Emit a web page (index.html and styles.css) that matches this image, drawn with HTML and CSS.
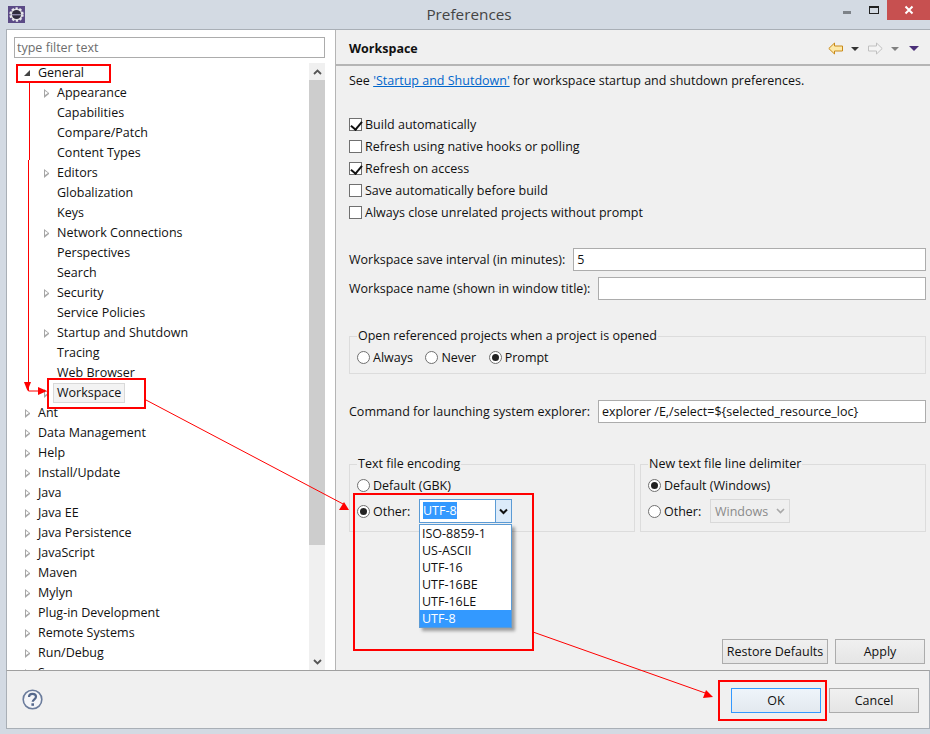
FILE: index.html
```html
<!DOCTYPE html>
<html lang="en">
<head>
    <meta charset="UTF-8">
    <title>Preferences</title>
    <link rel="stylesheet" href="styles.css">
</head>
<body>
<div class="window">
    <div class="titlebar">
        <svg class="app-icon" width="17" height="17" viewBox="0 0 17 17">
            <rect width="17" height="17" fill="#5b4a86"/>
            <circle cx="8.5" cy="8.5" r="6" fill="#d8d8dc" stroke="#e8e8ec" stroke-width="2.4" stroke-dasharray="2.2 1.6"/>
            <circle cx="8.5" cy="8.5" r="4.6" fill="#2f2b3d"/>
            <rect x="4" y="8" width="9" height="1.4" fill="#8d87a8"/>
        </svg>
        <div class="title">Preferences</div>
        <div class="win-controls">
            <span class="win-min"></span>
            <span class="win-max"></span>
            <span class="win-close">
                <svg width="10" height="10" viewBox="0 0 10 10"><path d="M1.5 1.5l7 7M8.5 1.5l-7 7" stroke="#fff" stroke-width="2" fill="none"/></svg>
            </span>
        </div>
    </div>

    <div class="main">
        <div class="left">
            <input class="filter" type="text" placeholder="type filter text">
            <div class="tree-wrap">
                <ul class="tree">
                    <li><i class="tw open"></i>General</li>
                    <li class="sub"><i class="tw"></i>Appearance</li>
                    <li class="sub"><i></i>Capabilities</li>
                    <li class="sub"><i></i>Compare/Patch</li>
                    <li class="sub"><i></i>Content Types</li>
                    <li class="sub"><i class="tw"></i>Editors</li>
                    <li class="sub"><i></i>Globalization</li>
                    <li class="sub"><i></i>Keys</li>
                    <li class="sub"><i class="tw"></i>Network Connections</li>
                    <li class="sub"><i></i>Perspectives</li>
                    <li class="sub"><i></i>Search</li>
                    <li class="sub"><i class="tw"></i>Security</li>
                    <li class="sub"><i></i>Service Policies</li>
                    <li class="sub"><i class="tw"></i>Startup and Shutdown</li>
                    <li class="sub"><i></i>Tracing</li>
                    <li class="sub"><i></i>Web Browser</li>
                    <li class="sub"><i class="tw"></i><span class="selected">Workspace</span></li>
                    <li><i class="tw"></i>Ant</li>
                    <li><i class="tw"></i>Data Management</li>
                    <li><i class="tw"></i>Help</li>
                    <li><i class="tw"></i>Install/Update</li>
                    <li><i class="tw"></i>Java</li>
                    <li><i class="tw"></i>Java EE</li>
                    <li><i class="tw"></i>Java Persistence</li>
                    <li><i class="tw"></i>JavaScript</li>
                    <li><i class="tw"></i>Maven</li>
                    <li><i class="tw"></i>Mylyn</li>
                    <li><i class="tw"></i>Plug-in Development</li>
                    <li><i class="tw"></i>Remote Systems</li>
                    <li><i class="tw"></i>Run/Debug</li>
                    <li><i class="tw"></i>Server</li>
                </ul>
                <div class="scrollbar">
                    <div class="sb-btn">
                        <svg width="9" height="6" viewBox="0 0 9 6"><path d="M1 5l3.5-3.5L8 5" stroke="#555" stroke-width="1.8" fill="none"/></svg>
                    </div>
                    <div class="sb-thumb"></div>
                    <div class="sb-rest"></div>
                    <div class="sb-btn">
                        <svg width="9" height="6" viewBox="0 0 9 6"><path d="M1 1l3.5 3.5L8 1" stroke="#555" stroke-width="1.8" fill="none"/></svg>
                    </div>
                </div>
            </div>
        </div>

        <div class="right">
            <div class="page-head">
                <h1>Workspace</h1>
                <div class="nav">
                    <svg width="15" height="13" viewBox="0 0 15 13"><path d="M6.500 1L.8 6.500 6.500 12V9H14.500V4H6.500z" fill="#fde9a8" stroke="#c98a1a"/></svg>
                    <i class="drop dark"></i>
                    <svg class="fwd" width="15" height="13" viewBox="0 0 15 13"><path d="M8.500 1l5.700 5.500L8.500 12V9H.5V4h8z" fill="#f4f4f4" stroke="#c0c0c0"/></svg>
                    <i class="drop grey"></i>
                    <i class="drop purple"></i>
                </div>
            </div>
            <div class="page">
                <p class="intro">See <a href="#">'Startup and Shutdown'</a> for workspace startup and shutdown preferences.</p>

                <div class="checks">
                    <div class="check"><i class="box on"></i>Build automatically</div>
                    <div class="check"><i class="box"></i>Refresh using native hooks or polling</div>
                    <div class="check"><i class="box on"></i>Refresh on access</div>
                    <div class="check"><i class="box"></i>Save automatically before build</div>
                    <div class="check"><i class="box"></i>Always close unrelated projects without prompt</div>
                </div>

                <div class="field first"><label>Workspace save interval (in minutes):</label><div class="txt">5</div></div>
                <div class="field second"><label>Workspace name (shown in window title):</label><div class="txt"></div></div>

                <fieldset class="group open-projects">
                    <legend>Open referenced projects when a project is opened</legend>
                    <div class="radios">
                        <span class="radio"><i class="dot"></i>Always</span>
                        <span class="radio"><i class="dot"></i>Never</span>
                        <span class="radio"><i class="dot on"></i>Prompt</span>
                    </div>
                </fieldset>

                <div class="field command"><label>Command for launching system explorer:</label><div class="txt">explorer /E,/select=${selected_resource_loc}</div></div>

                <div class="group-row">
                    <fieldset class="group half">
                        <legend>Text file encoding</legend>
                        <div class="radio-line"><i class="dot"></i>Default (GBK)</div>
                        <div class="radio-line other"><i class="dot on"></i><span class="other-label">Other:</span>
                            <div class="combo"><span class="combo-val"><b>UTF-8</b></span><span class="combo-btn"><svg width="9" height="7" viewBox="0 0 9 7"><path d="M1 1.5l3.5 3.5L8 1.5" stroke="#111" stroke-width="2" fill="none"/></svg></span></div>
                        </div>
                    </fieldset>
                    <fieldset class="group half">
                        <legend>New text file line delimiter</legend>
                        <div class="radio-line"><i class="dot on"></i>Default (Windows)</div>
                        <div class="radio-line other"><i class="dot"></i><span class="other-label">Other:</span>
                            <div class="combo-off">Windows<svg width="9" height="6" viewBox="0 0 9 6"><path d="M1 1l3.5 3.5L8 1" stroke="#a8a8a8" stroke-width="1.6" fill="none"/></svg></div>
                        </div>
                    </fieldset>
                </div>

                <div class="page-btns">
                    <button class="btn restore">Restore Defaults</button>
                    <button class="btn apply">Apply</button>
                </div>
            </div>
        </div>
    </div>

    <div class="footer">
        <svg width="21" height="21" viewBox="0 0 21 21">
            <circle cx="10.5" cy="10.5" r="9.3" fill="#f4f5f8" stroke="#6b7c9c" stroke-width="1.6"/>
            <path d="M7 8c0-2 1.600-3.200 3.500-3.200S14 6 14 7.800c0 2.400-3.300 2.600-3.300 5" fill="none" stroke="#55688c" stroke-width="2.200"/>
            <rect x="9.400" y="14.300" width="2.600" height="2.500" fill="#55688c"/>
        </svg>
        <div class="footer-btns">
            <button class="btn ok">OK</button>
            <button class="btn">Cancel</button>
        </div>
    </div>
</div>

<ul class="combo-list">
    <li>ISO-8859-1</li>
    <li>US-ASCII</li>
    <li>UTF-16</li>
    <li>UTF-16BE</li>
    <li>UTF-16LE</li>
    <li class="picked">UTF-8</li>
</ul>

<!-- red notes drawn over the screenshot -->
<svg class="notes" width="930" height="734" viewBox="0 0 930 734">
    <g fill="none" stroke="#ff0000">
        <rect x="17" y="65" width="93" height="17" stroke-width="2"/>
        <rect x="48" y="379" width="97" height="29" stroke-width="2"/>
        <rect x="354" y="494" width="179" height="156" stroke-width="2"/>
        <rect x="719" y="681" width="107" height="39" stroke-width="2"/>
        <path d="M29.500 83V160M28.500 160V391H40M146 400L345 505M533 632L708 694"/>
    </g>
    <g fill="#ff0000">
        <path d="M24 382h7l-3.500 9z"/>
        <path d="M38 387l9 4-9 4z"/>
        <path d="M349 510H339L344 502z"/>
        <path d="M713 697L703 698L706 690z"/>
    </g>
</svg>
</body>
</html>
```

FILE: styles.css
```css
* {
    box-sizing: border-box;
}
body {
    margin: 0;
    width: 930px;
    height: 734px;
    overflow: hidden;
    background-color: #d3dae3;
    font-family: "Open Sans", "Noto Sans", Arial, sans-serif;
    font-size: 12px;
    color: #111;
}
i {
    font-style: normal;
}
ul {
    list-style: none;
    margin: 0;
    padding: 0;
}

/* window frame */
.window {
    padding-left: 6px;
    height: 729px;
    display: flex;
    flex-direction: column;
}
.titlebar {
    height: 29px;
    flex: none;
    display: flex;
    margin-left: -6px;
    position: relative;
}
.app-icon {
    margin: 6px 0 0 8px;
}
.title {
    position: absolute;
    left: 8px;
    right: 0;
    top: 4px;
    text-align: center;
    font-size: 15.3px;
    color: #444;
}
.win-controls {
    margin-left: auto;
    display: flex;
    height: 20px;
    position: relative;
}
.win-min {
    width: 8px;
    height: 3px;
    margin: 11px 0 0 0;
    background: #7d8288;
}
.win-max {
    width: 10px;
    height: 8px;
    margin: 6px 8px 0 18px;
    border: 1px solid #222;
    border-top-width: 2px;
}
.win-close {
    width: 43px;
    height: 20px;
    background: #c75050;
    display: flex;
    align-items: center;
    justify-content: center;
}

.main {
    flex: 1;
    display: flex;
    min-height: 0;
    border-top: 1px solid #a9afb6;
    border-left: 1px solid #a9afb6;
}

/* left side */
.left {
    width: 329px;
    flex: none;
    background: #fff;
    padding: 7px 10px 0 7px;
    border-right: 1px solid #b5b5b5;
    display: flex;
    flex-direction: column;
}
.filter {
    width: 311px;
    height: 21px;
    flex: none;
    border: 1px solid #acacac;
    padding: 0 2px;
    font: inherit;
    font-size: 12.5px;
    outline: none;
}
.filter::placeholder {
    color: #6d6d6d;
    opacity: 1;
}
.tree-wrap {
    margin-top: 5px;
    flex: 1;
    display: flex;
    min-height: 0;
    overflow: hidden;
}
.tree {
    flex: 1;
    overflow: hidden;
}
.tree li {
    height: 20px;
    line-height: 20px;
    display: flex;
    align-items: center;
    white-space: nowrap;
    color: #111;
    font-size: 12.5px;
}
.tree li i {
    width: 7px;
    height: 9px;
    flex: none;
    margin: 0 6px 0 11px;
}
.tree li.sub {
    padding-left: 19px;
}
.tw {
    border-left: 5px solid #a6a6a6;
    border-top: 4px solid transparent;
    border-bottom: 4px solid transparent;
    position: relative;
}
.tw::after {
    content: "";
    position: absolute;
    left: -4px;
    top: -2px;
    border-left: 3px solid #fff;
    border-top: 2px solid transparent;
    border-bottom: 2px solid transparent;
}
.tree li i.open {
    width: 0;
    height: 0;
    margin: 0 8px 0 10px;
    border: 0;
    border-right: 6px solid #444;
    border-top: 6px solid transparent;
}
.tree li i.open::after {
    display: none;
}
.selected {
    background: #f3f3f3;
    border: 1px solid #d9d9d9;
    padding: 0 3px;
    margin-left: -4px;
    height: 20px;
    line-height: 18px;
}
.scrollbar {
    width: 16px;
    flex: none;
    display: flex;
    flex-direction: column;
    background: #f0f0f0;
}
.sb-btn {
    height: 17px;
    flex: none;
    display: flex;
    align-items: center;
    justify-content: center;
}
.sb-thumb {
    height: 465px;
    background: #cdcdcd;
}
.sb-rest {
    flex: 1;
}

/* right side */
.right {
    flex: 1;
    background: #f0f0f0;
    display: flex;
    flex-direction: column;
    min-width: 0;
}
.page-head {
    height: 36px;
    flex: none;
    border-bottom: 2px solid #b5b5b5;
    display: flex;
    align-items: center;
    justify-content: space-between;
    padding: 3px 11px 0 13px;
}
.page-head h1 {
    margin: 0;
    font-size: 12.5px;
    font-weight: 700;
}
.nav {
    display: flex;
    align-items: center;
}
.fwd {
    margin-left: 9px;
}
.drop {
    width: 0;
    height: 0;
    margin-left: 8px;
    border-left: 4px solid transparent;
    border-right: 4px solid transparent;
    border-top: 4px solid #333;
}
.drop.grey {
    border-top-color: #808080;
}
.drop.purple {
    border-left-width: 5px;
    border-right-width: 5px;
    border-top: 5px solid #4a2f78;
    margin-left: 10px;
}
.page {
    flex: 1;
    padding: 0 4px 0 13px;
    display: flex;
    flex-direction: column;
    font-size: 12.5px;
}
.intro {
    margin: 6px 0 0 0;
    line-height: 18px;
}
.intro a {
    color: #0066cc;
}
.checks {
    margin-top: 25px;
    display: flex;
    flex-direction: column;
    gap: 4px;
}
.check {
    height: 18px;
    display: flex;
    align-items: center;
}
.box {
    width: 13px;
    height: 13px;
    margin-right: 3px;
    border: 1px solid #707070;
    background: #fff;
    position: relative;
}
.box.on::after {
    content: "";
    position: absolute;
    left: 3px;
    top: 0;
    width: 5px;
    height: 9px;
    border: solid #111;
    border-width: 0 2px 2px 0;
    transform: rotate(40deg);
}
.field {
    display: flex;
    align-items: center;
    height: 23px;
}
.field label {
    margin-right: 8px;
    white-space: nowrap;
}
.txt {
    flex: 1;
    height: 23px;
    line-height: 21px;
    background: #fff;
    border: 1px solid #acacac;
    padding: 0 3px;
    white-space: nowrap;
}
.field.first {
    margin-top: 27px;
}
.field.second {
    margin-top: 6px;
}
.field.command {
    margin-top: 26px;
}
.group {
    margin: 0;
    padding: 0 0 0 7px;
    min-width: 0;
    border: 1px solid #dcdcdc;
}
.group legend {
    padding: 0 1px;
    line-height: 16px;
}
.open-projects {
    margin-top: 28px;
    height: 46px;
}
.radios {
    display: flex;
    gap: 12.5px;
    margin-top: 4px;
}
.radio {
    display: flex;
    align-items: center;
    height: 18px;
}
.dot {
    width: 13px;
    height: 13px;
    flex: none;
    margin-right: 3px;
    border: 1px solid #707070;
    border-radius: 50%;
    background: #fff;
    position: relative;
}
.dot.on::after {
    content: "";
    position: absolute;
    left: 2px;
    top: 2px;
    width: 7px;
    height: 7px;
    border-radius: 50%;
    background: #222;
}
.group-row {
    margin-top: 33px;
    display: flex;
    gap: 5px;
}
.half {
    flex: 1;
    height: 76px;
}
.radio-line {
    display: flex;
    align-items: center;
    height: 18px;
    margin-top: 4px;
}
.radio-line.other {
    margin-top: 8px;
}
.other-label {
    width: 46px;
}
.combo {
    width: 93px;
    height: 24px;
    flex: none;
    display: flex;
    background: #fff;
    border: 1px solid #5b9bd5;
}
.combo-val {
    flex: 1;
    padding: 2px 0 0 3px;
}
.combo-val b {
    font-weight: 400;
    background: #3399ff;
    color: #fff;
    display: inline-block;
    height: 17px;
    line-height: 17px;
}
.combo-btn {
    width: 16px;
    border-left: 1px solid #5b9bd5;
    background: #dcebfa;
    display: flex;
    align-items: center;
    justify-content: center;
}
.combo-off {
    width: 80px;
    height: 24px;
    display: flex;
    align-items: center;
    justify-content: space-between;
    padding: 0 4px;
    color: #8a8a8a;
    background: #efefef;
    border: 1px solid #d9d9d9;
}
.page-btns {
    margin-top: auto;
    padding-bottom: 6px;
    display: flex;
    justify-content: flex-end;
    gap: 7px;
    padding-right: 1px;
}
.btn {
    width: 90px;
    height: 25px;
    padding: 0;
    font: inherit;
    font-size: 12.5px;
    color: #111;
    background: linear-gradient(#f0f0f0, #e5e5e5);
    border: 1px solid #acacac;
}
.restore {
    width: 106px;
}

/* bottom bar */
.footer {
    height: 59px;
    flex: none;
    background: #f0f0f0;
    border: 1px solid #a9afb6;
    border-top: 1px solid #a0a0a0;
    display: flex;
    align-items: center;
    padding: 0 10px 0 15px;
    justify-content: space-between;
}
.footer-btns {
    display: flex;
    gap: 8px;
    margin-top: 1px;
}
.ok {
    border-color: #3399ff;
    background: linear-gradient(#eef4fa, #e3e9ef);
}

/* open combo list lies over the page */
.combo-list {
    position: absolute;
    left: 419px;
    top: 524px;
    width: 93px;
    background: #fff;
    border: 1px solid #5b9bd5;
    box-shadow: 3px 3px 3px rgba(0, 0, 0, 0.35);
    font-size: 12.5px;
}
.combo-list li {
    height: 17px;
    line-height: 17px;
    padding-left: 2px;
}
.combo-list li.picked {
    background: #3399ff;
    color: #fff;
}
.notes {
    position: absolute;
    left: 0;
    top: 0;
    pointer-events: none;
}
```
